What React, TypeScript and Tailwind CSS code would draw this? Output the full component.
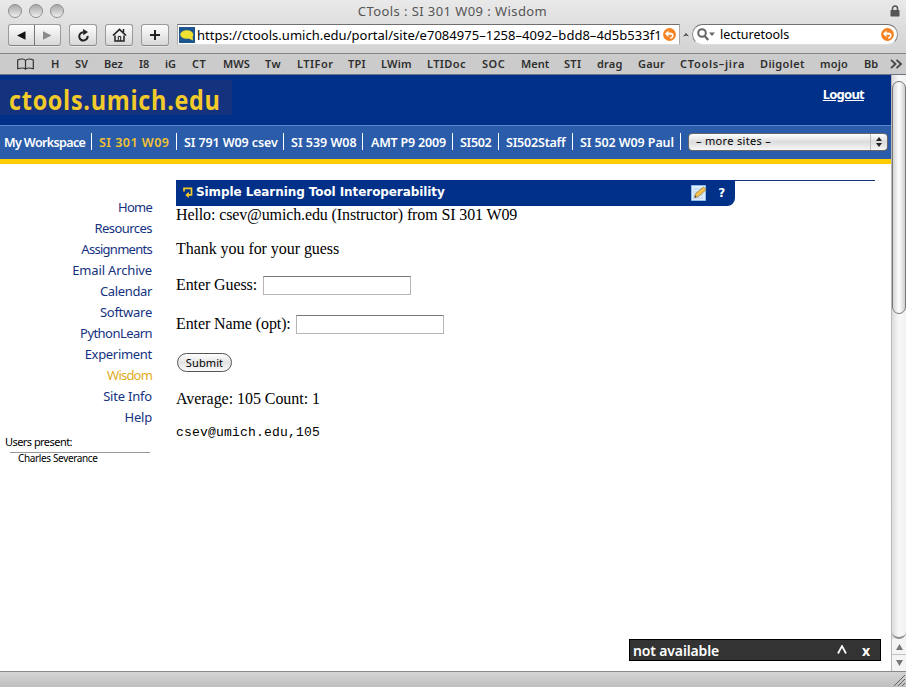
import React from "react";

const bookmarks: [string, string][] = [
  ["H", "w-[24px]"],
  ["SV", "w-[29px]"],
  ["Bez", "w-[35px]"],
  ["I8", "w-[26px]"],
  ["iG", "w-[27px]"],
  ["CT", "w-[31px] tracking-[0.4px]"],
  ["MWS", "w-[42px]"],
  ["Tw", "w-[32px] tracking-[0.4px]"],
  ["LTIFor", "w-[51px] tracking-[0.5px]"],
  ["TPI", "w-[33px] tracking-[0.2px]"],
  ["LWim", "w-[46px] tracking-[0.2px]"],
  ["LTIDoc", "w-[55px] tracking-[0.4px]"],
  ["SOC", "w-[39px] tracking-[0.5px]"],
  ["Ment", "w-[43px]"],
  ["STI", "w-[33px] tracking-[0.3px]"],
  ["drag", "w-[41px] tracking-[0.2px]"],
  ["Gaur", "w-[42px] tracking-[0.2px]"],
  ["CTools–jira", "w-[80px] tracking-[0.7px]"],
  ["Diigolet", "w-[60px] tracking-[0.35px]"],
  ["mojo", "w-[44px] tracking-[0.2px]"],
  ["Bb", "w-[26px]"],
];

const sites: [string, string][] = [
  ["My Workspace", "w-[92px] pl-1 text-white tracking-[-0.62px]"],
  ["SI 301 W09", "w-[85px] pl-[7px] text-[#f2c230] tracking-[0.48px]"],
  ["SI 791 W09 csev", "w-[107px] pl-[7px] text-white tracking-[-0.1px]"],
  ["SI 539 W08", "w-[79px] pl-[7px] text-white"],
  ["AMT P9 2009", "w-[90px] pl-2 text-white tracking-[-0.2px]"],
  ["SI502", "w-[46px] pl-[7px] text-white tracking-[-0.3px]"],
  ["SI502Staff", "w-[74px] pl-[7px] text-white tracking-[-0.2px]"],
  ["SI 502 W09 Paul", "w-[108px] pl-[7px] text-white tracking-[-0.1px]"],
];

const tools: [string, string][] = [
  ["Home", "tracking-[-0.75px]"],
  ["Resources", "tracking-[-0.55px]"],
  ["Assignments", "tracking-[-0.72px]"],
  ["Email Archive", "tracking-[-0.15px]"],
  ["Calendar", "tracking-[-0.35px]"],
  ["Software", "tracking-[-0.25px]"],
  ["PythonLearn", "tracking-[-0.55px]"],
  ["Experiment", "tracking-[-0.3px]"],
  ["Wisdom", "tracking-[-0.8px] text-[#e0ac1c]"],
  ["Site Info", "tracking-[-0.2px]"],
  ["Help", "tracking-[-0.2px]"],
];

const buttonLook =
  "flex h-[22px] items-center justify-center rounded-[3px] border border-[#9a9a9a] border-b-[#858585] bg-linear-to-b from-[#fdfdfd] to-[#d8d8d8] shadow-[0_1px_0_#e8e8e8]";

function Light() {
  return (
    <span className="size-[14px] rounded-full border border-[#8e8e8e] bg-linear-to-b from-[#a9a9a9] via-[#c9c9c9] to-[#f0f0f0]" />
  );
}

function SnapBack() {
  return (
    <svg width="13" height="13" viewBox="0 0 13 13" className="shrink-0">
      <circle cx="6.5" cy="6.5" r="6.4" fill="#f58220" />
      <path d="M2 5.800 5.400 2.400v2h1.800c2.100 0 3.400 1.200 3.400 3S9.300 10.700 7.200 10.700V9.200c1.100 0 1.700-.7 1.700-1.600S8.300 6.800 7.200 6.800H5.400v2.400z" fill="#fff" />
    </svg>
  );
}

function Chrome() {
  return (
    <header className="bg-linear-to-b from-[#e9e9e9] to-[#c9c9c9]">
      <div className="flex h-[22px] items-center pl-2 pr-[6px]">
        <div className="flex w-[160px] gap-[7px]">
          <Light />
          <Light />
          <Light />
        </div>
        <h1 className="flex-1 pr-[3px] text-center text-[13px] leading-[22px] tracking-[0.42px] text-[#555]">
          CTools : SI 301 W09 : Wisdom
        </h1>
        <div className="flex w-[160px] justify-end">
          <svg width="10" height="12" viewBox="0 0 10 12">
            <path d="M2.500 6V3.500a2.500 2.500 0 0 1 5 0V6" fill="none" stroke="#555" strokeWidth="1.500" />
            <rect x=".5" y="5" width="9" height="6.500" rx=".7" fill="#555" />
          </svg>
        </div>
      </div>
      <div className="flex h-[31px] pl-2 pt-[2px]">
        <div className={buttonLook + " w-[53px]"}>
          <span className="flex h-full w-[26px] items-center justify-center border-r border-[#777]">
            <svg width="9" height="9" viewBox="0 0 9 9"><path d="M0 4.500 8.500.3v8.400z" fill="#111" /></svg>
          </span>
          <span className="flex flex-1 items-center justify-center">
            <svg width="9" height="9" viewBox="0 0 9 9"><path d="M8.500 4.500 0 .3v8.400z" fill="#8a8a8a" /></svg>
          </span>
        </div>
        <div className={buttonLook + " ml-2 w-[28px]"}>
          <svg width="13" height="13" viewBox="0 0 13 13">
            <path d="M10.600 6.800A4.200 4.200 0 1 1 6.300 3.200" fill="none" stroke="#222" strokeWidth="2" />
            <path d="M6 0 11 3.100 6.300 6.200z" fill="#222" />
          </svg>
        </div>
        <div className={buttonLook + " ml-2 w-[28px]"}>
          <svg width="15" height="14" viewBox="0 0 15 14" fill="none" stroke="#222">
            <path d="M1 7.500 7.500 1.300 14 7.500" strokeWidth="1.700" />
            <path d="M3 7.500V13h9V7.500M11.500 1v3.500" strokeWidth="1.500" />
            <path d="M6.300 13V8.500h2.400V13" />
          </svg>
        </div>
        <div className={buttonLook + " ml-2 w-[28px]"}>
          <svg width="12" height="12" viewBox="0 0 12 12"><path d="M6 1v10M1 6h10" stroke="#222" strokeWidth="2" /></svg>
        </div>
        <div className="ml-2 flex h-[21px] w-[503px] items-center border border-t-[#707070] border-x-[#aaa] border-b-[#ddd] bg-white pl-[1px] pr-[3px]">
          <svg width="16" height="16" viewBox="0 0 16 16" className="shrink-0">
            <path d="M0 0h16v16H0z" fill="#1d568f" />
            <ellipse cx="7.800" cy="7.500" rx="6.500" ry="4.300" fill="#f0e030" />
            <path d="m9 11 5 2.500-.5-5z" fill="#f0e030" />
          </svg>
          <span className="ml-[2px] flex-1 whitespace-nowrap text-[13px] leading-[18px] tracking-[0.02px] text-black">
            https://ctools.umich.edu/portal/site/e7084975–1258–4092–bdd8–4d5b533f1
          </span>
          <SnapBack />
        </div>
        <div className="flex w-[12px] items-center justify-center pb-[7px]">
          <svg width="6" height="4" viewBox="0 0 6 4"><path d="M0 3.500 3 0l3 3.500-3-1z" fill="#444" /></svg>
        </div>
        <div className="flex h-[21px] w-[206px] items-center rounded-full border border-t-[#707070] border-x-[#8b8b8b] border-b-[#ddd] bg-white pl-1 pr-[3px]">
          <svg width="18" height="13" viewBox="0 0 18 13" className="shrink-0">
            <circle cx="5" cy="5" r="3.800" fill="none" stroke="#666" strokeWidth="2" />
            <path d="m7.800 8 3.400 4" stroke="#666" strokeWidth="2.200" />
            <path d="M12 4.500h6l-3 3.500z" fill="#666" />
          </svg>
          <span className="ml-[5px] flex-1 pt-px text-[12.500px] leading-[18px] text-black">lecturetools</span>
          <SnapBack />
        </div>
      </div>
      <nav className="flex h-[22px] items-center border-y border-t-[#858585] border-b-[#6c7584] bg-[#cbcbcb] pl-[17px] text-[11px] font-semibold text-[#2e2e2e]">
        <svg width="17" height="13" viewBox="0 0 17 13" className="mr-[17px] shrink-0" fill="none" stroke="#333" strokeWidth="1.200">
          <path d="M8.500 2.500v8.500C7 9.800 4 9.800.7 10.800V2C3.500.6 7 .6 8.500 2.500ZM8.500 2.500C10 .6 13.500.6 16.300 2v8.800C13 9.800 10 9.800 8.500 11" />
        </svg>
        {bookmarks.map(([name, look]) => (
          <span key={name} className={look + " shrink-0 whitespace-nowrap"}>{name}</span>
        ))}
        <svg width="13" height="10" viewBox="0 0 13 10" fill="none" stroke="#444" strokeWidth="1.800">
          <path d="m1 .8 4.500 4.200L1 9.200M6.500.8 11 5 6.500 9.200" />
        </svg>
      </nav>
    </header>
  );
}

function Scrollbar() {
  return (
    <aside className="flex w-[15px] flex-col border-l border-[#b8b8b8] bg-linear-to-r from-[#dcdcdc] via-[#f8f8f8] to-[#f2f2f2] pt-[6px]">
      <div className="h-[233px] rounded-full border border-[#777] bg-linear-to-r from-[#d4d4d4] via-[#fff] to-[#d0d0d0]" />
      <div className="h-[325px] rounded-b-full border-b-2 border-[#8c8c8c]" />
      <div className="flex h-[16px] items-center justify-center border-b border-[#c5c5c5] bg-[#f4f4f4]">
        <svg width="7" height="6" viewBox="0 0 7 6"><path d="M0 6 3.500 0 7 6z" fill="#777" /></svg>
      </div>
      <div className="flex h-[16px] items-center justify-center bg-[#f4f4f4]">
        <svg width="7" height="6" viewBox="0 0 7 6"><path d="M0 0 3.500 6 7 0z" fill="#777" /></svg>
      </div>
    </aside>
  );
}

function Portal() {
  return (
    <main className="relative w-[891px] bg-white">
      <div className="flex h-[50px] justify-between bg-[#003088] pt-[5px]">
        <div className="h-[35px] w-[232px] bg-[#15327f] pl-[9px] font-['Open_Sans',sans-serif] text-[26px] font-bold leading-[40px] text-[#f2cb2a]">
          <span className="inline-block origin-left scale-x-[0.9] tracking-[0.8px]">ctools.umich.edu</span>
        </div>
        <a className="mr-[27px] mt-[4px] text-[13px] font-bold leading-[20px] tracking-[-0.75px] text-white underline">Logout</a>
      </div>
      <nav className="flex h-[39px] border-b-[5px] border-t border-b-[#fc0] border-t-[#5c86cc] bg-[#2a5caa] pt-[7px] text-[12.500px] font-semibold">
        {sites.map(([name, look]) => (
          <span key={name} className={look + " h-[17px] shrink-0 whitespace-nowrap border-r border-r-white leading-[19px]"}>
            {name}
          </span>
        ))}
        <div className="ml-[7px] flex h-[18px] w-[200px] items-center rounded-[4px] border border-[#666] bg-linear-to-b from-[#fff] via-[#dcdcdc] to-[#f6f6f6] pl-[7px] text-[11px] font-normal tracking-[0.32px] text-black">
          <span className="flex-1 pb-px">– more sites –</span>
          <span className="flex h-full w-[17px] items-center justify-center border-l border-[#bbb]">
            <svg width="6" height="10" viewBox="0 0 6 10"><path d="M0 4 3 0l3 4zM0 6l3 4 3-4z" fill="#222" /></svg>
          </span>
        </div>
      </nav>
      <div className="flex">
        <section className="w-[176px] pt-[33px]">
          <ul className="pr-6 text-right text-[13px] leading-[21px] text-[#15327f]">
            {tools.map(([tool, look]) => (
              <li key={tool} className={look}>{tool}</li>
            ))}
          </ul>
          <p className="mt-[7px] pl-[5px] text-[11px] leading-[14px] tracking-[-0.55px] text-black">Users present:</p>
          <p className="ml-[10px] mt-[3px] w-[140px] border-t border-[#999] pl-2 text-[10px] leading-[11px] tracking-[-0.36px] text-black">
            Charles Severance
          </p>
        </section>
        <section className="w-[699px] pt-4 font-['Liberation_Serif',serif] text-[16px] leading-[18px] tracking-[-0.1px] text-black">
          <div className="border-t border-[#15327f]">
            <div className="-mt-px flex h-[26px] w-[559px] items-center rounded-br-lg bg-[#003088] pl-[7px] font-['DejaVu_Sans',sans-serif] text-white">
              <svg width="10" height="12" viewBox="0 0 10 12" fill="none" stroke="#f5c92a" strokeWidth="1.700">
                <path d="M1 4.500V1.300h7.500v6.500H5" />
                <path d="M5.800 4.800v6.200L2.300 7.900z" fill="#f5c92a" stroke="none" />
              </svg>
              <h2 className="ml-[3px] flex-1 pb-[2px] text-[12px] font-bold tracking-[-0.08px]">Simple Learning Tool Interoperability</h2>
              <svg width="16" height="16" viewBox="0 0 16 16">
                <path d="M.5.500h14v15H.5z" fill="#dcecff" stroke="#8fbde8" />
                <path d="M2 4h10M2 7h10M2 10h10M2 13h10" stroke="#b5d0ec" />
                <path d="m3.500 12.500 1.200-4 7.800-6.500 2.500 2.700-7.500 6.800z" fill="#f2c14c" stroke="#9c7630" strokeWidth=".7" />
                <path d="m3.500 12.500.6-2 1.600 1.500z" fill="#333" />
              </svg>
              <span className="ml-[11px] mr-[10px] text-[12px] font-bold">?</span>
            </div>
          </div>
          <p className="tracking-[-0.12px]">Hello: csev@umich.edu (Instructor) from SI 301 W09</p>
          <p className="mt-4 tracking-[-0.05px]">Thank you for your guess</p>
          <p className="mt-[17px] flex h-[20px] items-center">
            Enter Guess:
            <input className="ml-[6px] h-[19px] w-[148px] border border-[#b5b5b5] border-t-[#777] bg-white" />
          </p>
          <p className="mt-[19px] flex h-[20px] items-center">
            Enter Name (opt):
            <input className="ml-[5px] h-[19px] w-[148px] border border-[#b5b5b5] border-t-[#777] bg-white" />
          </p>
          <button className="ml-[1px] mt-[19px] block h-[19px] w-[55px] rounded-full border border-[#555] bg-linear-to-b from-[#fff] via-[#e4e4e4] to-[#fafafa] font-['Noto_Sans',sans-serif] text-[11px] leading-[16px] tracking-[0.1px]">
            Submit
          </button>
          <p className="mt-[18px] tracking-[-0.05px]">Average: 105 Count: 1</p>
          <pre className="mt-[17px] font-['Liberation_Mono',monospace] text-[13px] leading-[16px] tracking-[0.2px]">csev@umich.edu,105</pre>
        </section>
      </div>
      <div className="absolute bottom-[10px] right-[10px] flex h-[22px] w-[252px] items-center border border-black bg-[#333] pl-[3px] text-[14px] font-semibold tracking-[-0.15px] text-white">
        <span className="flex-1">not available</span>
        <svg width="10" height="9" viewBox="0 0 10 9" className="mr-[15px] mb-px" fill="none" stroke="#fff" strokeWidth="1.700">
          <path d="M1 8.500 5 1l4 7.500" />
        </svg>
        <span className="mr-[10px] font-bold">x</span>
      </div>
    </main>
  );
}

export default function App() {
  return (
    <div className="flex h-[687px] w-[906px] flex-col overflow-hidden font-['Noto_Sans',sans-serif]">
      <Chrome />
      <div className="flex h-[596px]">
        <Portal />
        <Scrollbar />
      </div>
      <footer className="flex h-[16px] items-end justify-end border-t border-[#888] bg-linear-to-b from-[#d4d4d4] to-[#bfbfbf]">
        <svg width="12" height="13" viewBox="0 0 12 13" stroke="#666"><path d="M0 12 11 1M4 12l7-7M8 12l3-3" /></svg>
      </footer>
    </div>
  );
}
